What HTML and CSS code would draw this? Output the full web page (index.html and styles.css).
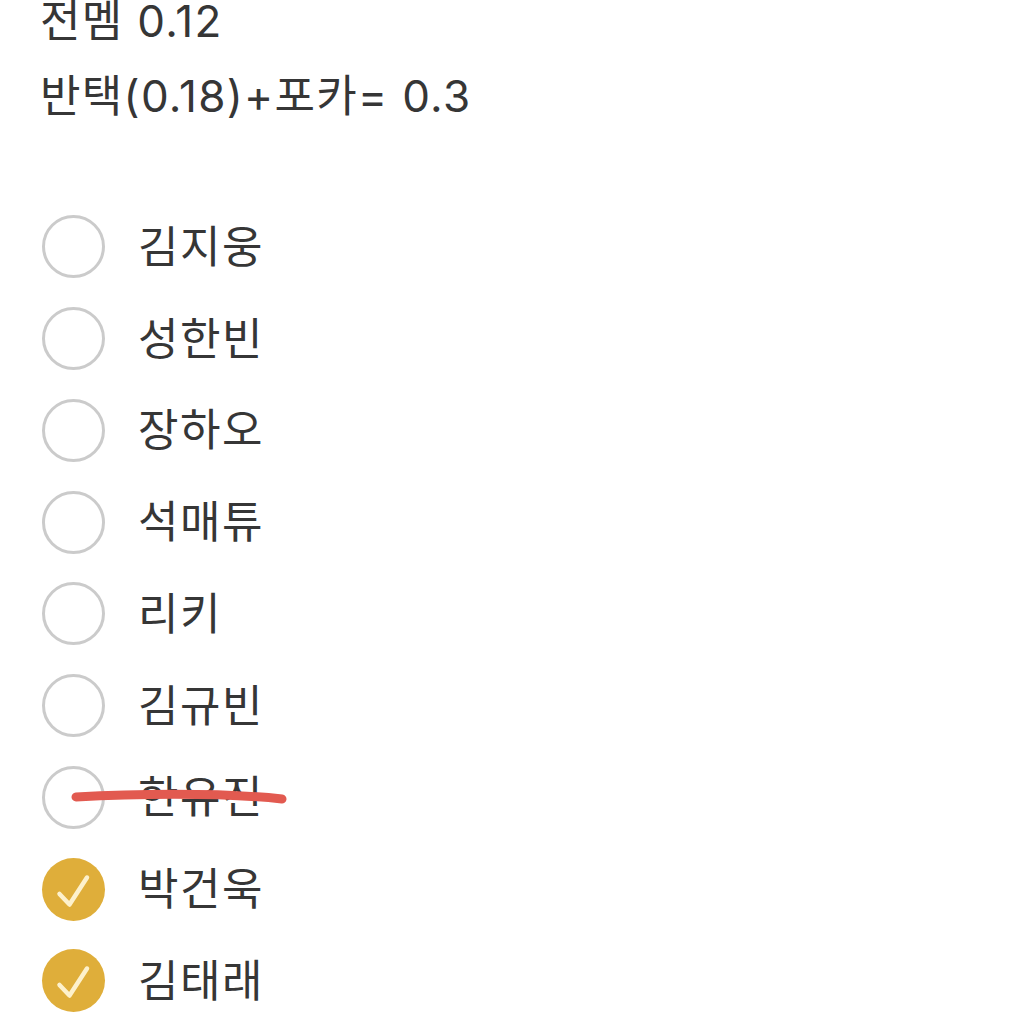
FILE: index.html
```html
<!DOCTYPE html>
<html lang="ko">
<head>
<meta charset="utf-8">
<link rel="stylesheet" href="styles.css">
</head>
<body>
<div class="page">
  <div class="header">
    <div class="line">전멤 0.12</div>
    <div class="line">반택(0.18)+포카= 0.3</div>
  </div>
  <ul class="list">
    <li class="row"><span class="box"></span><span class="name">김지웅</span></li>
    <li class="row"><span class="box"></span><span class="name">성한빈</span></li>
    <li class="row"><span class="box"></span><span class="name">장하오</span></li>
    <li class="row"><span class="box"></span><span class="name">석매튜</span></li>
    <li class="row"><span class="box"></span><span class="name">리키</span></li>
    <li class="row"><span class="box"></span><span class="name">김규빈</span></li>
    <li class="row struck"><span class="box"></span><span class="name">한유진</span>
      <svg class="strike" width="230" height="24" viewBox="0 0 230 24"><path d="M8 12 C 60 9, 150 7, 214 14" fill="none" stroke="#e25a50" stroke-width="9" stroke-linecap="round"/></svg>
    </li>
    <li class="row"><span class="box checked"><svg width="63" height="63" viewBox="0 0 63 63"><path d="M17.5 36 L27.5 46.5 L45 19.5" fill="none" stroke="#fdf1cc" stroke-width="4.5" stroke-linecap="round" stroke-linejoin="round"/></svg></span><span class="name">박건욱</span></li>
    <li class="row"><span class="box checked"><svg width="63" height="63" viewBox="0 0 63 63"><path d="M17.5 36 L27.5 46.5 L45 19.5" fill="none" stroke="#fdf1cc" stroke-width="4.5" stroke-linecap="round" stroke-linejoin="round"/></svg></span><span class="name">김태래</span></li>
  </ul>
</div>
</body>
</html>
```
FILE: styles.css
```css
html, body {
  margin: 0;
  padding: 0;
  background: #ffffff;
}
body {
  font-family: Inter, "Noto Sans CJK KR", sans-serif;
  color: #363636;
  overflow: hidden;
}
.page {
  padding-left: 40px;
}
.header {
  margin-top: -16px;
  font-size: 44px;
  line-height: 75px;
  letter-spacing: 1.3px;
}
.list {
  list-style: none;
  margin: 67px 0 0 0;
  padding: 0;
}
.row {
  position: relative;
  height: 91.75px;
  display: flex;
  align-items: center;
  gap: 33px;
}
.box {
  flex: none;
  width: 63px;
  height: 63px;
  margin-left: 2px;
  box-sizing: border-box;
  border: 3px solid #cbcbcb;
  border-radius: 50%;
  display: flex;
  align-items: center;
  justify-content: center;
}
.box.checked {
  border: none;
  background: #dfae3a;
}
.box svg { display: block; }
.name {
  font-size: 44px;
  line-height: 1;
  letter-spacing: 1.5px;
}
.strike {
  position: absolute;
  left: 28px;
  top: 33px;
}
```
